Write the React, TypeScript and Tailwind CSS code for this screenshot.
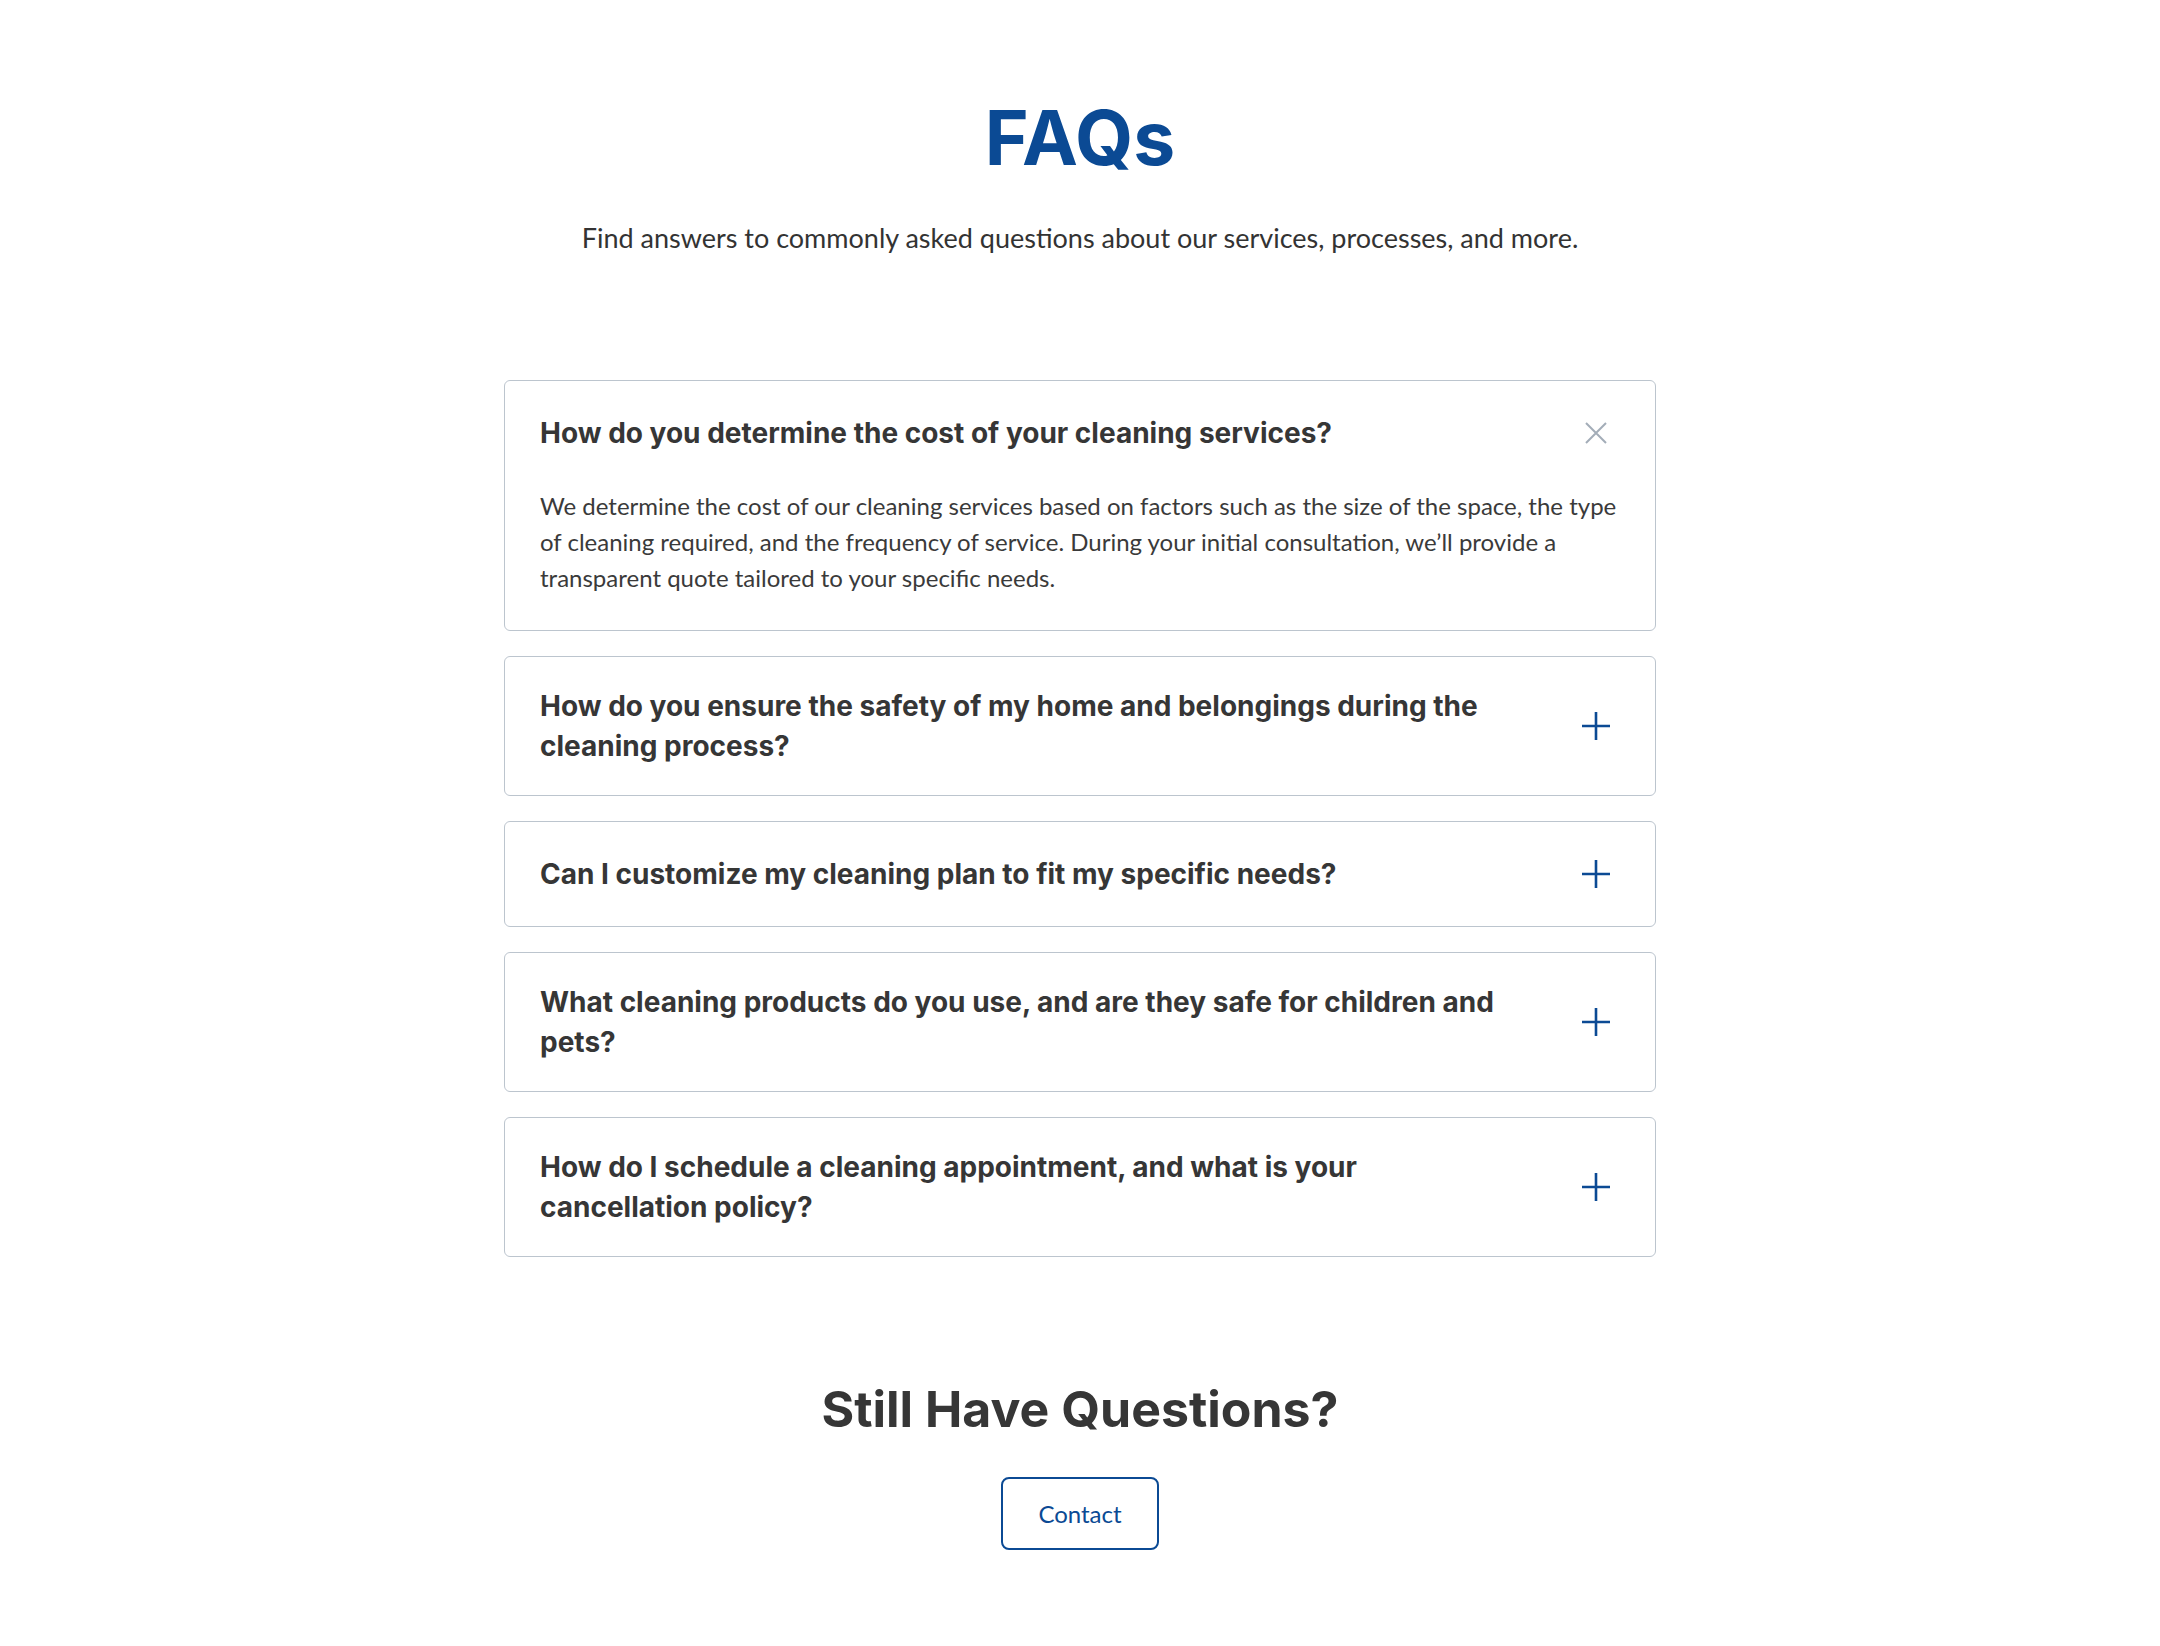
import React, { useState } from "react";

type Faq = { q: string; a: string };

const faqs: Faq[] = [
  {
    q: "How do you determine the cost of your cleaning services?",
    a: "We determine the cost of our cleaning services based on factors such as the size of the space, the type of cleaning required, and the frequency of service. During your initial consultation, we\u2019ll provide a transparent quote tailored to your specific needs.",
  },
  {
    q: "How do you ensure the safety of my home and belongings during the cleaning process?",
    a: "All of our cleaners are background-checked, trained and insured, and we follow strict procedures to protect your home and belongings.",
  },
  {
    q: "Can I customize my cleaning plan to fit my specific needs?",
    a: "Absolutely. We work with you to build a plan around the rooms, tasks and schedule that matter most to you.",
  },
  {
    q: "What cleaning products do you use, and are they safe for children and pets?",
    a: "We use eco-friendly, non-toxic products that are safe for children and pets while still delivering a thorough clean.",
  },
  {
    q: "How do I schedule a cleaning appointment, and what is your cancellation policy?",
    a: "You can book online or by phone. We ask for at least 24 hours\u2019 notice for cancellations or changes.",
  },
];

const heading = { fontFamily: "Inter, 'Open Sans', sans-serif" };
const body = { fontFamily: "Lato, 'Open Sans', sans-serif" };

function PlusIcon() {
  return (
    <svg width="28" height="28" viewBox="0 0 28 28" fill="none">
      <path d="M14 0v28M0 14h28" stroke="#0b4a94" strokeWidth="2.6" />
    </svg>
  );
}

function CloseIcon() {
  return (
    <svg width="22" height="22" viewBox="0 0 22 22" fill="none">
      <path d="M1 1l20 20M21 1L1 21" stroke="#a3adb8" strokeWidth="2" />
    </svg>
  );
}

function FaqItem({ item, open, onToggle }: { item: Faq; open: boolean; onToggle: () => void }) {
  return (
    <div className="rounded-md border border-[#bcc5ce] bg-white">
      <button
        type="button"
        onClick={onToggle}
        className="flex w-full items-center gap-[56px] py-[29px] pl-[35px] pr-[36px] text-left"
      >
        <span
          className="flex-1 text-[28px] font-bold leading-[40px] text-[#363636]"
          style={heading}
        >
          {item.q}
        </span>
        <span className="flex h-[46px] w-[46px] shrink-0 items-center justify-center">
          {open ? <CloseIcon /> : <PlusIcon />}
        </span>
      </button>
      {open && (
        <p
          className="pb-[34px] pl-[35px] pr-[30px] pt-[3px] text-[24px] leading-[36px] text-[#3a3a3a]"
          style={body}
        >
          {item.a}
        </p>
      )}
    </div>
  );
}

export default function App() {
  const [open, setOpen] = useState<number | null>(0);

  return (
    <div className="min-h-[1646px] bg-white">
      <section className="mx-auto flex max-w-6xl flex-col items-center pt-[90px]">
        <h1 className="text-[75px] font-bold leading-[96px] text-[#0b4a94]" style={heading}>
          FAQs
        </h1>
        <p className="mt-[34px] text-[27px] leading-[36px] text-[#333333]" style={body}>
          Find answers to commonly asked questions about our services, processes, and more.
        </p>

        <div className="mt-[124px] flex w-full flex-col gap-[25px]">
          {faqs.map((f, i) => (
            <FaqItem
              key={f.q}
              item={f}
              open={open === i}
              onToggle={() => setOpen(open === i ? null : i)}
            />
          ))}
        </div>

        <h2
          className="mt-[120px] text-[50px] font-bold leading-[64px] text-[#363636]"
          style={heading}
        >
          Still Have Questions?
        </h2>
        <button
          type="button"
          className="mt-[36px] h-[73px] w-[158px] rounded-lg border-2 border-[#0b4a94] text-[24px] text-[#0b4a94]"
          style={body}
        >
          Contact
        </button>
      </section>
    </div>
  );
}
